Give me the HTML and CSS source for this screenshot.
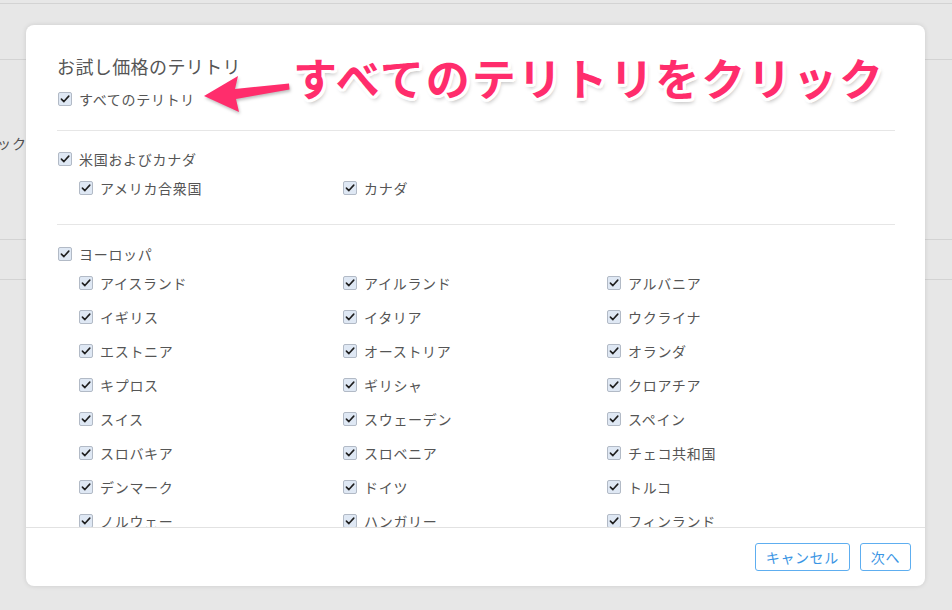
FILE: index.html
```html
<!DOCTYPE html>
<html lang="ja">
<head>
<meta charset="utf-8">
<title>お試し価格のテリトリ</title>
<link rel="stylesheet" href="styles.css">
</head>
<body>
<div class="bg">
  <div class="bg-top"></div>
  <div class="bg-head"></div>
  <div class="bg-row1"><span class="bg-text">ック</span></div>
  <div class="bg-row2"></div>
</div>

<div class="modal">
  <div class="modal-body">
    <div class="title">お試し価格のテリトリ</div>
    <label class="item all"><span class="cb"><svg viewBox="0 0 13 13"><path d="M2.6 6.6 L5.3 9.3 L10.6 3.4"/></svg></span>すべてのテリトリ</label>
    <div class="divider first"></div>

    <div class="group">
      <label class="item parent"><span class="cb"><svg viewBox="0 0 13 13"><path d="M2.6 6.6 L5.3 9.3 L10.6 3.4"/></svg></span>米国およびカナダ</label>
      <div class="grid">
        <label class="item"><span class="cb"><svg viewBox="0 0 13 13"><path d="M2.6 6.6 L5.3 9.3 L10.6 3.4"/></svg></span>アメリカ合衆国</label>
        <label class="item"><span class="cb"><svg viewBox="0 0 13 13"><path d="M2.6 6.6 L5.3 9.3 L10.6 3.4"/></svg></span>カナダ</label>
      </div>
    </div>
    <div class="divider second"></div>

    <div class="group eu">
      <label class="item parent"><span class="cb"><svg viewBox="0 0 13 13"><path d="M2.6 6.6 L5.3 9.3 L10.6 3.4"/></svg></span>ヨーロッパ</label>
      <div class="grid">
        <label class="item"><span class="cb"><svg viewBox="0 0 13 13"><path d="M2.6 6.6 L5.3 9.3 L10.6 3.4"/></svg></span>アイスランド</label>
        <label class="item"><span class="cb"><svg viewBox="0 0 13 13"><path d="M2.6 6.6 L5.3 9.3 L10.6 3.4"/></svg></span>アイルランド</label>
        <label class="item"><span class="cb"><svg viewBox="0 0 13 13"><path d="M2.6 6.6 L5.3 9.3 L10.6 3.4"/></svg></span>アルバニア</label>
        <label class="item"><span class="cb"><svg viewBox="0 0 13 13"><path d="M2.6 6.6 L5.3 9.3 L10.6 3.4"/></svg></span>イギリス</label>
        <label class="item"><span class="cb"><svg viewBox="0 0 13 13"><path d="M2.6 6.6 L5.3 9.3 L10.6 3.4"/></svg></span>イタリア</label>
        <label class="item"><span class="cb"><svg viewBox="0 0 13 13"><path d="M2.6 6.6 L5.3 9.3 L10.6 3.4"/></svg></span>ウクライナ</label>
        <label class="item"><span class="cb"><svg viewBox="0 0 13 13"><path d="M2.6 6.6 L5.3 9.3 L10.6 3.4"/></svg></span>エストニア</label>
        <label class="item"><span class="cb"><svg viewBox="0 0 13 13"><path d="M2.6 6.6 L5.3 9.3 L10.6 3.4"/></svg></span>オーストリア</label>
        <label class="item"><span class="cb"><svg viewBox="0 0 13 13"><path d="M2.6 6.6 L5.3 9.3 L10.6 3.4"/></svg></span>オランダ</label>
        <label class="item"><span class="cb"><svg viewBox="0 0 13 13"><path d="M2.6 6.6 L5.3 9.3 L10.6 3.4"/></svg></span>キプロス</label>
        <label class="item"><span class="cb"><svg viewBox="0 0 13 13"><path d="M2.6 6.6 L5.3 9.3 L10.6 3.4"/></svg></span>ギリシャ</label>
        <label class="item"><span class="cb"><svg viewBox="0 0 13 13"><path d="M2.6 6.6 L5.3 9.3 L10.6 3.4"/></svg></span>クロアチア</label>
        <label class="item"><span class="cb"><svg viewBox="0 0 13 13"><path d="M2.6 6.6 L5.3 9.3 L10.6 3.4"/></svg></span>スイス</label>
        <label class="item"><span class="cb"><svg viewBox="0 0 13 13"><path d="M2.6 6.6 L5.3 9.3 L10.6 3.4"/></svg></span>スウェーデン</label>
        <label class="item"><span class="cb"><svg viewBox="0 0 13 13"><path d="M2.6 6.6 L5.3 9.3 L10.6 3.4"/></svg></span>スペイン</label>
        <label class="item"><span class="cb"><svg viewBox="0 0 13 13"><path d="M2.6 6.6 L5.3 9.3 L10.6 3.4"/></svg></span>スロバキア</label>
        <label class="item"><span class="cb"><svg viewBox="0 0 13 13"><path d="M2.6 6.6 L5.3 9.3 L10.6 3.4"/></svg></span>スロベニア</label>
        <label class="item"><span class="cb"><svg viewBox="0 0 13 13"><path d="M2.6 6.6 L5.3 9.3 L10.6 3.4"/></svg></span>チェコ共和国</label>
        <label class="item"><span class="cb"><svg viewBox="0 0 13 13"><path d="M2.6 6.6 L5.3 9.3 L10.6 3.4"/></svg></span>デンマーク</label>
        <label class="item"><span class="cb"><svg viewBox="0 0 13 13"><path d="M2.6 6.6 L5.3 9.3 L10.6 3.4"/></svg></span>ドイツ</label>
        <label class="item"><span class="cb"><svg viewBox="0 0 13 13"><path d="M2.6 6.6 L5.3 9.3 L10.6 3.4"/></svg></span>トルコ</label>
        <label class="item"><span class="cb"><svg viewBox="0 0 13 13"><path d="M2.6 6.6 L5.3 9.3 L10.6 3.4"/></svg></span>ノルウェー</label>
        <label class="item"><span class="cb"><svg viewBox="0 0 13 13"><path d="M2.6 6.6 L5.3 9.3 L10.6 3.4"/></svg></span>ハンガリー</label>
        <label class="item"><span class="cb"><svg viewBox="0 0 13 13"><path d="M2.6 6.6 L5.3 9.3 L10.6 3.4"/></svg></span>フィンランド</label>
        <label class="item"><span class="cb"><svg viewBox="0 0 13 13"><path d="M2.6 6.6 L5.3 9.3 L10.6 3.4"/></svg></span>フランス</label>
        <label class="item"><span class="cb"><svg viewBox="0 0 13 13"><path d="M2.6 6.6 L5.3 9.3 L10.6 3.4"/></svg></span>ブルガリア</label>
        <label class="item"><span class="cb"><svg viewBox="0 0 13 13"><path d="M2.6 6.6 L5.3 9.3 L10.6 3.4"/></svg></span>ベルギー</label>
      </div>
    </div>
  </div>
  <div class="modal-footer">
    <button class="btn">キャンセル</button>
    <button class="btn">次へ</button>
  </div>
</div>

<svg class="arrow" viewBox="0 0 100 44" width="100" height="44">
  <path d="M2 22 L36 2 L33 15 L87 9.5 L87.5 15.5 L34 25 L37 38 Z"/>
</svg>
<div class="callout">すべてのテリトリをクリック</div>
</body>
</html>
```

FILE: styles.css
```css
* { box-sizing: border-box; }

html, body {
  margin: 0;
  padding: 0;
  width: 952px;
  height: 610px;
  overflow: hidden;
}

body {
  background: #e7e7e7;
  font-family: "Noto Sans CJK JP", "Noto Sans", sans-serif;
  color: #555;
  position: relative;
}

.bg-top {
  height: 4px;
  border-bottom: 1px solid #d3d3d3;
}

.bg-head {
  height: 56px;
  border-bottom: 1px solid #d3d3d3;
}

.bg-row1 {
  height: 180px;
  border-bottom: 1px solid #d3d3d3;
  padding-top: 73px;
}

.bg-text {
  display: block;
  font-size: 14px;
  line-height: 20px;
  color: #4f4f4f;
  letter-spacing: 1px;
  margin-left: -3px;
}

.bg-row2 {
  height: 40px;
  border-bottom: 1px solid #d3d3d3;
}

.modal {
  position: absolute;
  left: 26px;
  top: 25px;
  width: 899px;
  height: 561px;
  background: #fff;
  border-radius: 8px;
  box-shadow: 0 0 5px rgba(0, 0, 0, 0.12);
  display: flex;
  flex-direction: column;
}

.modal-body {
  height: 502px;
  overflow: hidden;
  padding: 29px 30px 0 31px;
}

.title {
  font-size: 18px;
  line-height: 24px;
  letter-spacing: 0.4px;
  color: #555;
}

.item {
  display: flex;
  align-items: center;
  height: 20px;
  font-size: 14px;
  line-height: 20px;
  letter-spacing: 0.7px;
  color: #555;
  white-space: nowrap;
}

.cb {
  flex: none;
  width: 14px;
  height: 14px;
  margin: 0 7px 0 1px;
  background: #dfe8f4;
  border: 1px solid #b2bac6;
  border-radius: 2px;
  display: flex;
}

.cb svg {
  width: 12px;
  height: 12px;
}

.cb path {
  fill: none;
  stroke: #1e1e1e;
  stroke-width: 1.7;
  stroke-linecap: round;
  stroke-linejoin: round;
}

.all {
  margin-top: 11px;
}

.divider {
  height: 1px;
  background: #e6e6e6;
}

.divider.first {
  margin-top: 21px;
}

.divider.second {
  margin-top: 26px;
}

.group {
  padding-top: 18px;
}

.group.eu {
  padding-top: 19px;
}

.grid {
  display: grid;
  grid-template-columns: 264px 264px 1fr;
  row-gap: 14px;
  margin-top: 9px;
  padding-left: 21px;
}

.modal-footer {
  flex: 1;
  border-top: 1px solid #e2e2e2;
  display: flex;
  justify-content: flex-end;
  align-items: flex-start;
  gap: 10px;
  padding: 15px 14px 0 0;
}

.btn {
  height: 28px;
  padding: 0 10px;
  background: #fff;
  border: 1px solid #5eaef0;
  border-radius: 3px;
  color: #3a95e4;
  font-family: "Noto Sans CJK JP", "Noto Sans", sans-serif;
  font-size: 14px;
  line-height: 26px;
  letter-spacing: 0.6px;
}

.arrow {
  position: absolute;
  left: 202px;
  top: 74px;
  overflow: visible;
}

.arrow path {
  fill: #ff2d6c;
  filter: drop-shadow(1px 2px 1.5px rgba(0, 0, 0, 0.25));
}

.callout {
  position: absolute;
  left: 293px;
  top: 46px;
  font-family: "Noto Sans CJK JP", sans-serif;
  font-weight: 700;
  font-size: 44px;
  line-height: 62px;
  letter-spacing: 1.9px;
  color: #ff2d6c;
  white-space: nowrap;
  text-shadow:
    3px 0 0 #fff, -3px 0 0 #fff, 0 3px 0 #fff, 0 -3px 0 #fff,
    2px 2px 0 #fff, -2px 2px 0 #fff, 2px -2px 0 #fff, -2px -2px 0 #fff,
    3px 1.5px 0 #fff, -3px 1.5px 0 #fff, 3px -1.5px 0 #fff, -3px -1.5px 0 #fff,
    1.5px 3px 0 #fff, -1.5px 3px 0 #fff, 1.5px -3px 0 #fff, -1.5px -3px 0 #fff,
    2px 4px 4px rgba(0, 0, 0, 0.28);
}
```
